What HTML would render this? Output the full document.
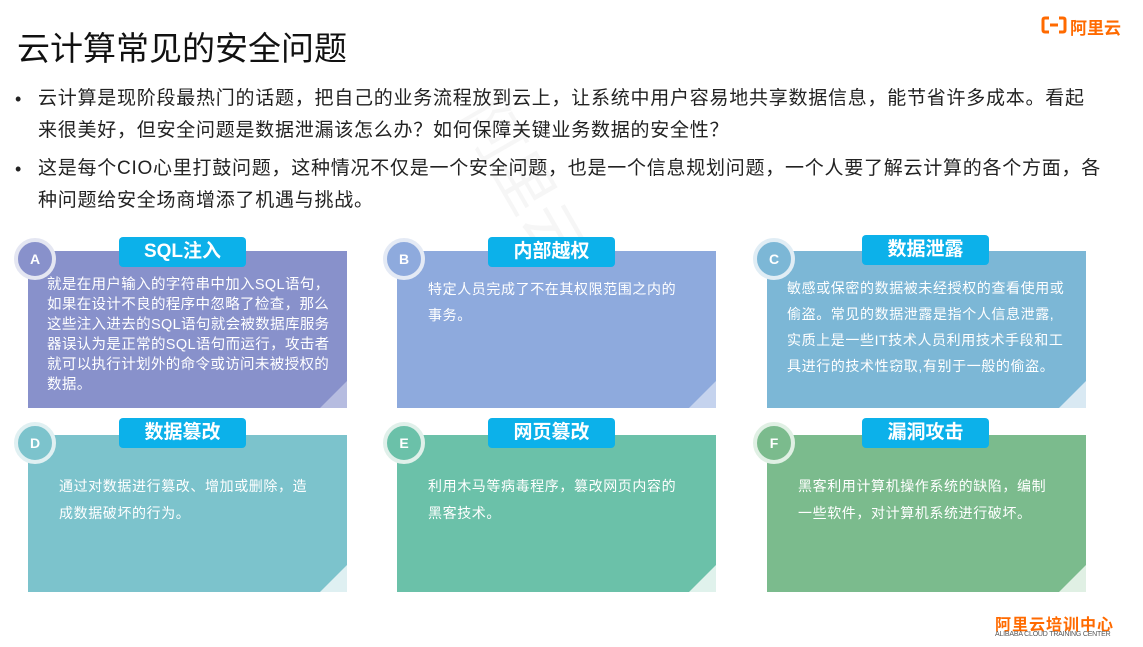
<!DOCTYPE html>
<html><head><meta charset="utf-8"><style>
*{margin:0;padding:0;box-sizing:border-box}
html,body{width:1143px;height:647px;overflow:hidden}
body{background:#fff;position:relative;font-family:"Liberation Sans","Noto Sans CJK SC",sans-serif;color:#222}
.t{position:absolute;left:17px;top:22px;font-size:33px;color:#111}
.p{position:absolute;left:38px;font-size:19px;letter-spacing:0.75px;line-height:32px;color:#222;white-space:nowrap}
.dot{position:absolute;left:15px;font-size:18px}
.card{position:absolute;width:319px;height:157px;color:#fff;font-size:14px}
.card .fold{position:absolute;right:0;bottom:0;width:0;height:0;border-style:solid;border-width:27px 27px 0 0}
.card .txt{position:absolute;white-space:nowrap;letter-spacing:0.6px}
.lab{position:absolute;background:#0cb1ea;color:#fff;font-weight:bold;font-size:19px;text-align:center;border-radius:4px;height:30px;line-height:30px;width:127px}
.cir{position:absolute;width:42px;height:42px;border-radius:50%;border:4px solid;color:#fff;font-weight:bold;font-size:14px;text-align:center;line-height:34px}
.wm{position:absolute;color:rgba(0,0,0,0.035);font-size:60px;transform:rotate(60deg);transform-origin:left top}
</style></head><body>
<div class="t">云计算常见的安全问题</div>
<div class="dot" style="top:89px">•</div>
<div class="p" style="top:83px">云计算是现阶段最热门的话题，把自己的业务流程放到云上，让系统中用户容易地共享数据信息，能节省许多成本。看起<br>来很美好，但安全问题是数据泄漏该怎么办？如何保障关键业务数据的安全性？</div>
<div class="dot" style="top:159px">•</div>
<div class="p" style="top:153px">这是每个CIO心里打鼓问题，这种情况不仅是一个安全问题，也是一个信息规划问题，一个人要了解云计算的各个方面，各<br>种问题给安全场商增添了机遇与挑战。</div>

<div class="wm" style="left:520px;top:80px">阿里云大学</div>

<div class="card" style="left:28px;top:251px;background:#8891cb"><div class="fold" style="border-color:#b6bce0 transparent transparent transparent;transform:rotate(180deg)"></div>
<div class="txt" style="left:19px;top:24px;line-height:20px;font-size:14.5px;letter-spacing:0.35px">就是在用户输入的字符串中加入SQL语句，<br>如果在设计不良的程序中忽略了检查，那么<br>这些注入进去的SQL语句就会被数据库服务<br>器误认为是正常的SQL语句而运行，攻击者<br>就可以执行计划外的命令或访问未被授权的<br>数据。</div></div>
<div class="card" style="left:397px;top:251px;background:#8eaadd"><div class="fold" style="border-color:#c5d3ee transparent transparent transparent;transform:rotate(180deg)"></div>
<div class="txt" style="left:31px;top:25px;line-height:26px">特定人员完成了不在其权限范围之内的<br>事务。</div></div>
<div class="card" style="left:767px;top:251px;background:#7cb7d6"><div class="fold" style="border-color:#d9e9f3 transparent transparent transparent;transform:rotate(180deg)"></div>
<div class="txt" style="left:20px;top:24px;line-height:26px">敏感或保密的数据被未经授权的查看使用或<br>偷盗。常见的数据泄露是指个人信息泄露,<br>实质上是一些IT技术人员利用技术手段和工<br>具进行的技术性窃取,有别于一般的偷盗。</div></div>
<div class="card" style="left:28px;top:435px;background:#7cc3cc"><div class="fold" style="border-color:#dff0f2 transparent transparent transparent;transform:rotate(180deg)"></div>
<div class="txt" style="left:31px;top:38px;line-height:27px">通过对数据进行篡改、增加或删除，造<br>成数据破坏的行为。</div></div>
<div class="card" style="left:397px;top:435px;background:#6bc1a9"><div class="fold" style="border-color:#e0f2ec transparent transparent transparent;transform:rotate(180deg)"></div>
<div class="txt" style="left:31px;top:38px;line-height:27px">利用木马等病毒程序，篡改网页内容的<br>黑客技术。</div></div>
<div class="card" style="left:767px;top:435px;background:#7bbb8d"><div class="fold" style="border-color:#e0f0e4 transparent transparent transparent;transform:rotate(180deg)"></div>
<div class="txt" style="left:31px;top:38px;line-height:27px">黑客利用计算机操作系统的缺陷，编制<br>一些软件，对计算机系统进行破坏。</div></div>

<div class="lab" style="left:119px;top:237px">SQL注入</div>
<div class="lab" style="left:488px;top:237px">内部越权</div>
<div class="lab" style="left:862px;top:235px">数据泄露</div>
<div class="lab" style="left:119px;top:418px">数据篡改</div>
<div class="lab" style="left:488px;top:418px">网页篡改</div>
<div class="lab" style="left:862px;top:418px">漏洞攻击</div>

<div class="cir" style="left:14px;top:238px;background:#8891cb;border-color:#e4e6f2">A</div>
<div class="cir" style="left:383px;top:238px;background:#8eaadd;border-color:#e4eaf5">B</div>
<div class="cir" style="left:753px;top:238px;background:#7cb7d6;border-color:#e0edf5">C</div>
<div class="cir" style="left:14px;top:422px;background:#7cc3cc;border-color:#e0f0f2">D</div>
<div class="cir" style="left:383px;top:422px;background:#6bc1a9;border-color:#e0f0ea">E</div>
<div class="cir" style="left:753px;top:422px;background:#7bbb8d;border-color:#e0f0e4">F</div>

<svg style="position:absolute;left:1041px;top:16px" width="26" height="18" viewBox="0 0 26 18"><path d="M8 2H4Q2 2 2 4V14Q2 16 4 16H8M18 2H22Q24 2 24 4V14Q24 16 22 16H18M9 9H17" fill="none" stroke="#ff6a00" stroke-width="3"/></svg>
<div style="position:absolute;left:1070px;top:14px;font-size:17px;font-weight:bold;color:#ff6a00">阿里云</div>
<div style="position:absolute;left:995px;top:611px;font-size:16px;font-weight:bold;color:#ff6a00;letter-spacing:1px">阿里云培训中心</div>
<div style="position:absolute;left:995px;top:631px;font-size:7px;color:#555;letter-spacing:-0.2px">ALIBABA CLOUD TRAINING CENTER</div>
</body></html>
